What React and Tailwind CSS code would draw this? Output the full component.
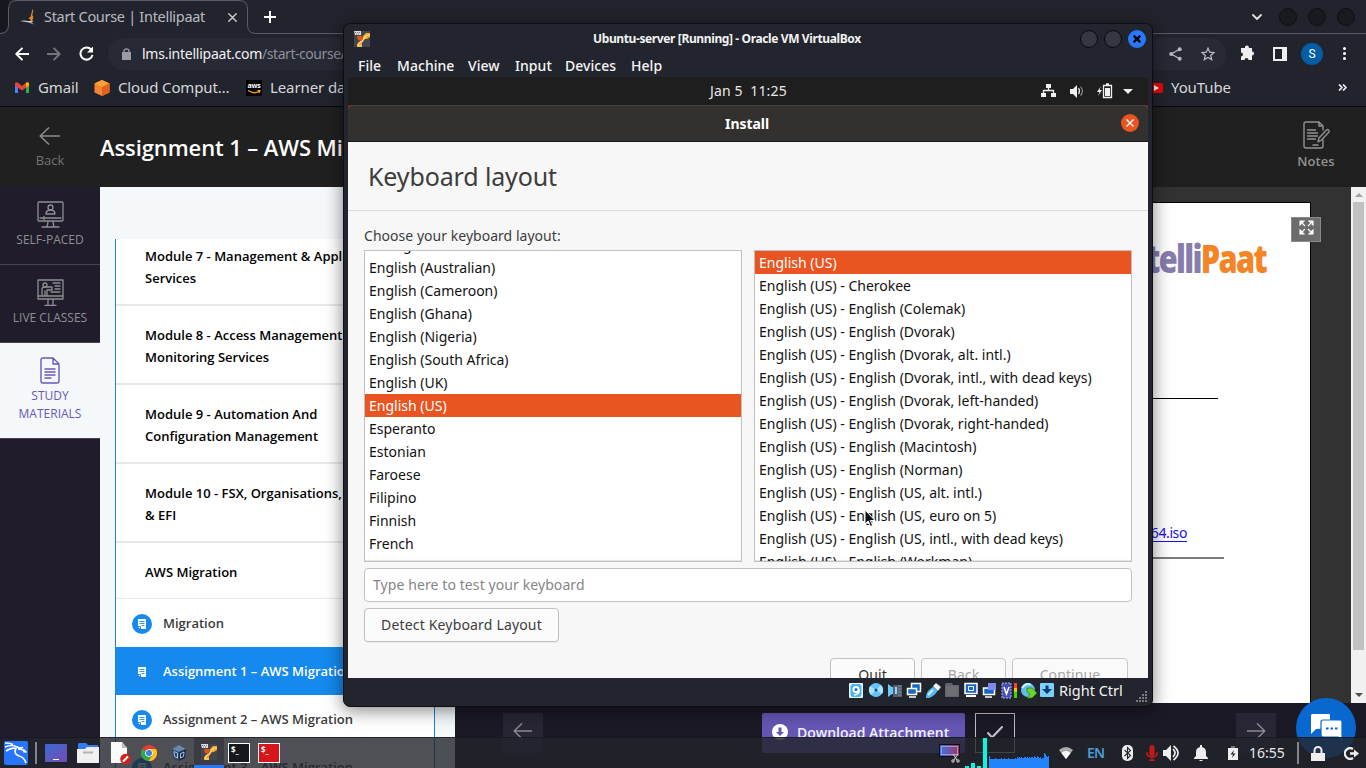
import React from "react";

const ICON = { fill: "none", stroke: "currentColor", strokeLinecap: "round", strokeLinejoin: "round" };

const leftLayouts = [
  "Dzongkha", "English (Australian)", "English (Cameroon)", "English (Ghana)", "English (Nigeria)",
  "English (South Africa)", "English (UK)", "English (US)", "Esperanto", "Estonian", "Faroese",
  "Filipino", "Finnish", "French", "French (Canada)",
];

const rightLayouts = [
  "English (US)", "English (US) - Cherokee", "English (US) - English (Colemak)", "English (US) - English (Dvorak)",
  "English (US) - English (Dvorak, alt. intl.)", "English (US) - English (Dvorak, intl., with dead keys)",
  "English (US) - English (Dvorak, left-handed)", "English (US) - English (Dvorak, right-handed)",
  "English (US) - English (Macintosh)", "English (US) - English (Norman)", "English (US) - English (US, alt. intl.)",
  "English (US) - English (US, euro on 5)", "English (US) - English (US, intl., with dead keys)",
  "English (US) - English (Workman)",
];

function ArrowLeft({ className }) {
  return (
    <svg className={className} viewBox="0 0 22 20" {...ICON} strokeWidth="1.6" strokeLinecap="butt">
      <path d="M21 10H1.5M10 1.5L1.2 10l8.8 8.5" />
    </svg>
  );
}

function TabStrip() {
  return (
    <div className="relative flex h-[34px] shrink-0 items-center bg-[#22242d]">
      <svg className="absolute left-0 top-0 h-[34px] w-[1366px]" viewBox="0 0 1366 34" fill="none">
        <path d="M0 0h9v22q-1 9-9 11z" fill="#17181f" />
        <path d="M0 33.500Q8.500 33.500 8.500 25V9Q8.500.5 17 .5H239Q247.500.5 247.500 9V25Q247.500 33.500 256 33.500H1366" stroke="#5b5d64" />
      </svg>
      <svg className="relative ml-[20px] h-[16px] w-[16px]" viewBox="0 0 16 16">
        <path d="M12.500 0q1 1 .5 3l-.7 3 1 2-1 5-3 .3q2-2 1-3L8 9q3-.5 3-3z" fill="#e8842a" />
        <path d="M0 12q4-1 8 0l6 0-3 1 3 2.500-5-2z" fill="#c9c8e0" />
      </svg>
      <span className="relative ml-[8px] w-[164px] pb-[2px] text-[14.500px] leading-[20px] tracking-[-0.3px] text-[#b9bac0]">Start Course | Intellipaat</span>
      <svg className="relative ml-[20px] h-[9px] w-[9px] text-[#c6c7cb]" viewBox="0 0 9 9" {...ICON} strokeWidth="1.500"><path d="M.8.8l7.400 7.400M8.200.8L.8 8.200" /></svg>
      <svg className="relative ml-[27px] h-[12px] w-[12px] text-white" viewBox="0 0 12 12" {...ICON} strokeWidth="2" strokeLinecap="butt"><path d="M6 0v12M0 6h12" /></svg>
      <div className="relative ml-auto mr-[11px] flex items-center">
        <svg className="mr-[17px] h-[7px] w-[10px] text-[#e0e0e2]" viewBox="0 0 10 7" {...ICON} strokeWidth="1.800"><path d="M1 1l4 4 4-4" /></svg>
        <div className="flex gap-[11px]">
          {[0, 1, 2].map((i) => <span key={i} className="h-[18px] w-[18px] rounded-full border border-[#0f1014] bg-[#191a1f]" />)}
        </div>
      </div>
    </div>
  );
}

function Toolbar() {
  return (
    <div className="flex h-[38px] shrink-0 items-center bg-[#22242d] pb-[1px]">
      <svg className="ml-[15px] mt-[2px] h-[14px] w-[14px] text-white" viewBox="0 0 14 14" {...ICON} strokeWidth="1.900" strokeLinecap="butt"><path d="M14 7H1.500M7.500 .8L1.300 7l6.200 6.200" /></svg>
      <svg className="ml-[18px] mt-[2px] h-[14px] w-[14px] text-[#73757c]" viewBox="0 0 14 14" {...ICON} strokeWidth="1.900" strokeLinecap="butt"><path d="M0 7h12.500M6.500 .8L12.700 7l-6.200 6.200" /></svg>
      <svg className="ml-[18px] mt-[2px] h-[15px] w-[15px] text-white" viewBox="0 0 15 15" fill="none" stroke="currentColor" strokeWidth="2">
        <path d="M12.200 3.500A6.100 6.100 0 1 0 13.500 9" /><path d="M14 .5v6H8z" fill="currentColor" stroke="none" />
      </svg>
      <div className="ml-[14px] mt-[2px] flex h-[32px] w-[1118px] items-center rounded-full bg-[#272934] pl-[14px]">
        <svg className="h-[12px] w-[9px] text-[#9b9ca3]" viewBox="0 0 9 12"><path d="M0 4h9v8H0z" fill="currentColor" /><path d="M2 5V3a2.500 2.200 0 0 1 5 0v2" fill="none" stroke="currentColor" strokeWidth="1.300" /></svg>
        <span className="ml-[11px] w-[900px] text-[14px] leading-[20px] tracking-[-0.45px] text-[#8e9098]"><span className="tracking-[-0.24px] text-[#f0f0f2]">lms.intellipaat.com</span>/start-course/</span>
        <svg className="ml-auto h-[14px] w-[13px] text-[#b7b8bd]" viewBox="0 0 13 14" fill="currentColor"><circle cx="10.700" cy="2.300" r="2" /><circle cx="2.200" cy="7" r="2" /><circle cx="10.700" cy="11.700" r="2" /><path d="M10.700 2.300L2.200 7l8.500 4.700" fill="none" stroke="currentColor" strokeWidth="1.300" /></svg>
        <svg className="ml-[19px] mr-[11px] h-[14px] w-[14px] text-[#b7b8bd]" viewBox="0 0 14 14" fill="none" stroke="currentColor" strokeWidth="1.300"><path d="M7 1.300l1.700 3.900 4.200.4-3.200 2.800 1 4.200L7 10.400l-3.700 2.200 1-4.200L1.100 5.600l4.200-.4z" /></svg>
      </div>
      <svg className="ml-[14px] h-[15px] w-[15px] text-[#efefef]" viewBox="0 0 15 15" fill="currentColor"><path d="M1 3h4a2 2 0 1 1 3.800 0H12v3.500a2 2 0 1 1 0 4V15H8.500a2 2 0 0 0-4 0H1v-3.500a2 2 0 0 0 0-4z" /></svg>
      <svg className="ml-[18px] mt-[2px] h-[14px] w-[14px]" viewBox="0 0 14 14"><path d="M1 1h12v12H1z" fill="none" stroke="#efefef" strokeWidth="2" /><path d="M9 1h4v12H9z" fill="#efefef" /></svg>
      <span className="ml-[14px] mt-[2px] flex h-[22px] w-[22px] items-center justify-center rounded-full bg-[#055da5] font-[Roboto] text-[12px] text-white">S</span>
      <span className="ml-[20px] mt-[2px] flex flex-col gap-[2px]">{[0, 1, 2].map((i) => <i key={i} className="h-[3px] w-[3px] rounded-full bg-white" />)}</span>
    </div>
  );
}

function Bookmarks() {
  return (
    <div className="flex h-[35px] shrink-0 items-center border-b border-[#08080b] bg-[#22242d] pb-[3px] text-[15px] leading-[20px] text-[#d6d7da]">
      <svg className="ml-[15px] h-[11px] w-[14px]" viewBox="0 0 14 11">
        <path d="M0 1.500L3 4v7H0z" fill="#4285f4" /><path d="M14 1.500L11 4v7h3z" fill="#34a853" /><path d="M0 1.500Q1-.5 3 .8L7 4l4-3.200q2-1.300 3 .7v2L7 8.500 0 3.500z" fill="#ea4335" /><path d="M11 .8q2-1.300 3 .7v2l-3 2z" fill="#fbbc04" />
      </svg>
      <span className="ml-[9px] w-[41px] pb-[2px] tracking-[-0.15px]">Gmail</span>
      <svg className="ml-[15px] h-[16px] w-[16px]" viewBox="0 0 16 16"><path d="M8 0l7.500 3.500v9L8 16 .5 12.500v-9z" fill="#f58536" /><path d="M8 0l7.500 3.500L8 7 .5 3.500z" fill="#fba333" /><path d="M15.500 3.500v9L8 16V7z" fill="#e2611c" /></svg>
      <span className="ml-[8px] w-[112px] pb-[2px] tracking-[-0.13px]">Cloud Comput…</span>
      <span className="ml-[16px] flex h-[16px] w-[16px] flex-col items-center bg-black pt-[2px] text-[7px] font-bold leading-[7px] tracking-[-0.3px] text-white">aws<svg className="mt-[1px] h-[4px] w-[13px]" viewBox="0 0 13 4" fill="none" stroke="#f59a23" strokeWidth="1.300"><path d="M0 .5q6 4 11 .8M9.500.6H12L11 3" /></svg></span>
      <span className="ml-[8px] pb-[2px] tracking-[-0.1px]">Learner dashboard</span>
      <span className="ml-auto mr-[8px] flex h-[10px] w-[14px] items-center justify-center rounded-[2px] bg-[#f20505]"><i className="border-y-[3px] border-l-[5px] border-y-transparent border-l-white" /></span>
      <span className="w-[59px] pb-[2px] tracking-[-0.1px]">YouTube</span>
      <svg className="ml-[108px] mr-[19px] h-[7px] w-[9px] text-[#efefef]" viewBox="0 0 9 7" {...ICON} strokeWidth="1.700" strokeLinecap="butt"><path d="M1 .5l3 3-3 3M5 .5l3 3-3 3" /></svg>
    </div>
  );
}

function CourseHeader() {
  return (
    <div className="flex h-[80px] shrink-0 items-start bg-[#202020] font-['Open_Sans']">
      <div className="flex w-[100px] flex-col items-center pt-[19px] text-[#737373]">
        <ArrowLeft className="h-[20px] w-[22px] text-[#8b8b8b]" />
        <span className="mt-[5px] text-[13px] leading-[18px]">Back</span>
      </div>
      <h1 className="mt-[24px] text-[22px] font-semibold leading-[32px] tracking-[-0.1px] text-white">Assignment 1 – AWS Migration</h1>
      <div className="ml-auto mr-[20px] flex w-[60px] flex-col items-center pt-[14px] text-[#929292]">
        <svg className="ml-[1px] h-[28px] w-[28px]" viewBox="0 0 28 28" {...ICON} strokeWidth="1.400">
          <path d="M20 9V5l-4-4H3Q1 1 1 3v22q0 2 2 2h15q2 0 2-2v-6M16 1v4h4M4.500 9h8M4.500 12h10M4.500 15h10M4.500 18h8M10 24h5M15 21l1-4 7.500-8q1-1 2 0t.5 2l-7.500 8z" />
        </svg>
        <span className="mt-[3px] text-[13px] font-semibold leading-[18px] tracking-[0.1px]">Notes</span>
      </div>
    </div>
  );
}

function Sidebar() {
  return (
    <nav className="flex w-[100px] shrink-0 flex-col bg-[#201c2c] text-center font-['Open_Sans'] text-[12px] leading-[18px] text-[#8f8f92]">
      <div className="flex h-[78px] flex-col items-center border-b border-[#45434d] pt-[14px]">
        <svg className="h-[27px] w-[27px]" viewBox="0 0 27 27" {...ICON} strokeWidth="1.300"><path d="M2 1h23q1 0 1 1v17q0 1-1 1H2q-1 0-1-1V2q0-1 1-1zM3 17h21M7 15.500v3M5 26h17M10 26l1-5M17 26l-1-5M9 13q0-4 4.500-4t4.500 4z" /><circle cx="13.500" cy="6.500" r="2.500" /></svg>
        <span className="mt-[3px]">SELF-PACED</span>
      </div>
      <div className="flex h-[78px] flex-col items-center border-b border-[#45434d] pt-[14px]">
        <svg className="h-[27px] w-[27px]" viewBox="0 0 27 27" {...ICON} strokeWidth="1.300"><path d="M1 1h25v19H1zM1 17h25M11 20v6M16 20v6M8 26.300h11M5 17v-7q0-2 3-2h7v3h-5v6M8 17v-5M16 4h7M18 7h5M18 10h5M14 13h9" /><circle cx="8" cy="6" r="2" /></svg>
        <span className="mt-[3px]">LIVE CLASSES</span>
      </div>
      <div className="flex h-[96px] flex-col items-center border-b border-[#45434d] bg-[#f4f8fb] pt-[14px] text-[#6957b8]">
        <svg className="mr-[1px] h-[27px] w-[20px]" viewBox="0 0 20 27" {...ICON} strokeWidth="1.400"><path d="M13 1H3Q1 1 1 3v21q0 2 2 2h14q2 0 2-2V7zM13 1v6h6M5 12h10M5 15h10M5 18h10M5 21h6" /></svg>
        <span className="mt-[3px]">STUDY<br />MATERIALS</span>
      </div>
    </nav>
  );
}

function DocBadge({ active }) {
  return (
    <span className={`ml-[16px] mt-[2px] flex h-[20px] w-[20px] items-center justify-center rounded-full ${active ? "" : "bg-[#1589ee]"}`}>
      <svg className="h-[10px] w-[8px]" viewBox="0 0 8 10"><path d="M0 0h8v10H3L0 8z" fill="#fff" /><path d="M1.500 2.500h5M1.500 4.500h5M3.500 6.500h3M0 7.500h2.500V10" stroke="#1589ee" strokeWidth=".9" fill="none" /></svg>
    </span>
  );
}

function Lesson({ children, active, className = "h-[48px]" }) {
  return (
    <div className={`flex shrink-0 items-center ${className} ${active ? "bg-[#1589ee] text-white" : "bg-white text-[#3b3b3b]"}`}>
      <DocBadge active={active} />
      <span className="ml-[11px] text-[13px] font-semibold">{children}</span>
    </div>
  );
}

function ModuleList() {
  const modules = [
    ["Module 8 - Access Management And", "Monitoring Services"],
    ["Module 9 - Automation And", "Configuration Management"],
    ["Module 10 - FSX, Organisations, SCP", "& EFI"],
  ];
  return (
    <div className="flex w-[355px] shrink-0 flex-col overflow-hidden bg-[#f4f8fb] pl-[15px] pt-[52px] font-['Open_Sans'] text-[13px] font-semibold leading-[22px] text-black">
      <div className="flex w-[320px] flex-col border-x border-[#1b83d8] bg-white">
        <div className="h-[67px] shrink-0 border-b-2 border-[#e8e8e8] pl-[29px] pt-[6px]">Module 7 - Management &amp; Application<br />Services</div>
        {modules.map(([a, b]) => (
          <div key={a} className="h-[79px] shrink-0 border-b-2 border-[#e8e8e8] pl-[29px] pt-[18px]">{a}<br />{b}</div>
        ))}
        <div className="h-[56px] shrink-0 border-b border-[#e8e8e8] pl-[29px] pt-[18px]">AWS Migration</div>
        <Lesson className="h-[48px]">Migration</Lesson>
        <Lesson active>Assignment 1 – AWS Migration</Lesson>
        <Lesson>Assignment 2 – AWS Migration</Lesson>
        <Lesson>Assignment 3 – AWS Migration</Lesson>
      </div>
    </div>
  );
}

function Viewer() {
  return (
    <div className="flex min-w-0 flex-1 flex-col bg-[#1c1927]">
      <div className="flex h-[516px] shrink-0 bg-[#323232]">
        <div className="relative ml-[40px] mt-[15px] flex w-[816px] flex-col items-end border border-b-0 border-black bg-white">
          <div className="mr-[44px] mt-[33px] origin-right scale-y-[1.06] scale-x-[0.83] font-['Open_Sans'] text-[37px] font-extrabold leading-[44px] tracking-[-2px] text-[#877cae]">Intelli<span className="text-[#f58426]">Paat</span></div>
          <div className="mr-[92px] mt-[118px] h-px w-[560px] bg-black" />
          <div className="mr-[123px] mt-[124px] text-[14px] leading-[20px] tracking-[-0.4px] text-[#1a0dee] underline underline-offset-3">ubuntu-20.04-server-amd64.iso</div>
          <div className="mr-[86px] mt-[14px] h-[2px] w-[600px] bg-[#7c7c7c]" />
          <div className="absolute right-[-11px] top-[14px] flex h-[25px] w-[30px] items-center justify-center border border-[#8a8a8a] bg-[#6c6c6c] pb-[4px]">
            <svg className="h-[15px] w-[15px]" viewBox="0 0 15 15" fill="#fff" stroke="#fff" strokeWidth="1.100"><path d="M1 1h4L1 5zM14 1v4l-4-4zM1 14v-4l4 4zM14 14h-4l4-4zM2 2l4 4M13 2L9 6M2 13l4-4M13 13L9 9" /></svg>
          </div>
        </div>
        <div className="ml-auto flex w-[15px] flex-col items-center bg-[#f1f1f1]">
          <i className="mt-[6px] border-x-[4px] border-b-[4px] border-x-transparent border-b-[#a3a3a3]" />
          <span className="mt-[5px] h-[448px] w-[11px] bg-[#c1c1c1]" />
          <i className="mb-[6px] mt-auto border-x-[4px] border-t-[4px] border-x-transparent border-t-[#505050]" />
        </div>
      </div>
      <div className="flex items-start pt-[10px] font-['Open_Sans']">
        <div className="ml-[48px] flex h-[40px] w-[40px] items-center justify-center bg-[#282534] pb-[4px] text-[#8b8a90]"><ArrowLeft className="h-[18px] w-[22px]" /></div>
        <div className="ml-[219px] flex h-[40px] w-[203px] items-center rounded-[2px] bg-[#6656b4] pl-[10px]">
          <svg className="mb-[2px] h-[16px] w-[16px]" viewBox="0 0 16 16"><circle cx="8" cy="8" r="8" fill="#fff" /><path d="M6.500 3.500h3V8H12l-4 4-4-4h2.500z" fill="#6656b4" /></svg>
          <span className="ml-[9px] text-[14px] font-semibold leading-[20px] text-[#f2f0f8]">Download Attachment</span>
        </div>
        <div className="ml-[10px] flex h-[40px] w-[40px] items-center justify-center border border-[#c0c0c4] pb-[2px] text-[#c4c4c6]">
          <svg className="h-[13px] w-[16px]" viewBox="0 0 16 13" {...ICON} strokeWidth="2"><path d="M1 7l4 4.500L15 1" /></svg>
        </div>
        <div className="ml-[221px] flex h-[40px] w-[40px] items-center justify-center bg-[#282534] pb-[4px] text-[#8b8a90]"><ArrowLeft className="h-[18px] w-[22px] rotate-180" /></div>
      </div>
    </div>
  );
}

function ChatBubble() {
  return (
    <div className="absolute left-[1296px] top-[698px] flex h-[60px] w-[60px] items-center justify-center rounded-full bg-[#0868cf]">
      <svg className="h-[28px] w-[32px]" viewBox="0 0 32 28"><path d="M2 0h17q1 0 1 1v13L6 15l-5 5V2q0-2 1-2z" fill="#fff" /><path d="M13 6h17q2 0 2 2v19l-4-4H13q-2 0-2-2V8q0-2 2-2z" fill="#fff" stroke="#0868cf" strokeWidth="1.200" /><path d="M16 14.500h2.500M20.500 14.500H23M25 14.500h2.500" stroke="#0868cf" strokeWidth="2" /></svg>
    </div>
  );
}

function VBoxTools({ className }) {
  return (
    <svg className={className} viewBox="0 0 16 16">
      <path d="M0 0h16v16H0z" fill="#44464e" />
      <path d="M9 5l3-3h4v4l-3 2-2 0-3 4v4H3v-3l3-2 2-2z" fill="#f5a52e" />
      <path d="M4 15l1-3 3-2 3-4 2-2h3M4 15h4" fill="none" stroke="#fde08a" strokeWidth="1.200" /><path d="M3 5h5l1 3-2 2-3-1z" fill="#e0551b" /><path d="M0 0h7v4H1z" fill="#ddd" /><path d="M1 1.500h5M2 3h4" stroke="#777" strokeDasharray="1 1" />
    </svg>
  );
}

function LayoutList({ items, selected, shift }) {
  return (
    <div className="h-[312px] w-[378px] overflow-hidden border border-[#c3c1bf] bg-white text-[14px] leading-[23px] tracking-[0px] text-[#111] shadow-[inset_0_-1px_1px_rgba(0,0,0,0.12)]">
      <div className={shift}>
        {items.map((t) => (
          <div key={t} className={`h-[23px] pl-[4px] ${t === selected ? "bg-[#e95420] text-white" : ""}`}>{t}</div>
        ))}
      </div>
    </div>
  );
}

function StatusIcons() {
  return (
    <svg className="h-[17px] w-[206px] shrink-0" viewBox="0 0 206 17">
      <g><rect x="0" y="1" width="14" height="15" rx="1" fill="#e9f7ff" /><rect x="1.500" y="2" width="11" height="13" rx="3" fill="#49b5ee" /><circle cx="7" cy="7.500" r="3.500" fill="#fff" /><circle cx="7" cy="7.500" r="1.500" fill="#126fc0" /><path d="M10 8q1 4-5 5" stroke="#fff" strokeWidth="1.500" fill="none" /></g>
      <circle cx="27" cy="8" r="7" fill="#66c4f6" /><path d="M27 8l5-5a7 7 0 0 1 1 9zM27 8l-5 5a7 7 0 0 1-1-9z" fill="#a8e2ff" /><circle cx="27" cy="8" r="1.500" fill="#0b4d8c" />
      <path d="M39 2l4 3h4v7h-4l-4 3z" fill="#6cc8f4" /><path d="M44 3h9v12h-9z" fill="#55606c" /><path d="M46 5h2v7h-2z" fill="#8ed6ff" /><path d="M49 4h3M49 7h3M49 10h3M49 13h3" stroke="#8a8f96" />
      <path d="M62.500 1.500h9v8h-9z" fill="#1867c4" stroke="#fff" strokeWidth="1.500" /><path d="M58.500 6.500h9v6h-9zM60 15h7" fill="#1867c4" stroke="#fff" strokeWidth="1.500" />
      <path d="M77 16q0-5 3-8l5-4 4 4q-3 6-9 8z" fill="#55baf2" /><path d="M84 4l3-3 5 4-3 4z" fill="#f4f4f4" stroke="#777" strokeWidth=".5" /><path d="M79 13l5-5" stroke="#c9edff" strokeWidth="2" />
      <path d="M96 3l1-2h6l1 2h6v12H96z" fill="#62636a" /><path d="M97 4h12v10H97z" fill="#6e6f75" />
      <path d="M116 1.500h12v10h-12z" fill="#1867c4" stroke="#fff" strokeWidth="1.500" /><path d="M119.500 4.500h5v4h-5z" fill="#1867c4" stroke="#fff" /><path d="M117 14h10" stroke="#fff" strokeWidth="2" />
      <path d="M134.500 6h11v6.500h-11z" fill="#1867c4" stroke="#fff" strokeWidth="1.500" /><path d="M139 1h8v7h-8z" fill="#7d8aea" /><path d="M136 15h7" stroke="#fff" strokeWidth="1.500" />
      <path d="M153 1h9v15h-9z" fill="#4650b8" stroke="#aab0f5" strokeDasharray="2 1" /><path d="M155 5l2.500 7L160 5" fill="none" stroke="#fff" strokeWidth="1.500" /><path d="M165 1h3v5h-3z" fill="#ff4218" /><path d="M165 6h3v4h-3z" fill="#f4c20a" /><path d="M165 10h3v6h-3z" fill="#34d900" />
      <circle cx="179" cy="8" r="7" fill="#61bdea" /><path d="M173 6q4-6 9-3" stroke="#c9f2ff" strokeWidth="2" fill="none" /><path d="M178 6h5l5 5-5 5h-5l3-4-3-2z" fill="#6dd22b" stroke="#267912" strokeWidth=".7" />
      <rect x="191" y="1" width="14" height="14" rx="1" fill="#7bd1fa" /><path d="M196.500 3.500h3V7h3.500l-5 5-5-5h3.500z" fill="#0c3d78" />
    </svg>
  );
}

function VirtualMachine() {
  return (
    <div className="absolute left-[343px] top-[23px] flex h-[684px] w-[810px] flex-col rounded-[7px] border border-[#0d0e12] bg-[#22252e] px-[4px] font-['Noto_Sans'] shadow-[0_3px_18px_rgba(0,0,0,0.5)]">
      <div className="flex h-[30px] shrink-0 items-center">
        <VBoxTools className="ml-[6px] h-[16px] w-[16px]" />
        <span className="ml-[223px] w-[268px] whitespace-nowrap text-[12px] font-bold leading-[18px] tracking-[-0.38px] text-[#f2f2f2]">Ubuntu-server [Running] - Oracle VM VirtualBox</span>
        <div className="ml-auto mr-[2px] flex gap-[6px]">
          <span className="h-[18px] w-[18px] rounded-full border border-[#07080a] bg-[#343741]" />
          <span className="h-[18px] w-[18px] rounded-full border border-[#07080a] bg-[#343741]" />
          <span className="flex h-[18px] w-[18px] items-center justify-center rounded-full bg-[#2777ff]"><svg className="h-[8px] w-[8px]" viewBox="0 0 8 8" stroke="#000" strokeWidth="2.300"><path d="M.7.7l6.600 6.600M7.300.7L.7 7.300" /></svg></span>
        </div>
      </div>
      <div className="flex h-[23px] shrink-0 items-center pl-[10px] text-[14px] font-medium leading-[20px] tracking-[0.05px] text-[#f5f5f5]">
        <span className="w-[39px]">File</span><span className="w-[71px]">Machine</span><span className="w-[47px]">View</span><span className="w-[50px]">Input</span><span className="w-[66px]">Devices</span><span>Help</span>
      </div>
      <div className="flex h-[28px] shrink-0 items-center bg-[#1e1e1e] text-[#e8e8e8]">
        <span className="ml-[362px] w-[78px] whitespace-pre text-[14px] leading-[20px] tracking-[0.15px]">Jan 5  11:25</span>
        <svg className="ml-auto mr-[15px] h-[16px] w-[92px]" viewBox="0 0 92 16">
          <g fill="#f0f0f0"><path d="M5 1h5v4H5zM0 10h5v4H0zM10 10h5v4h-5z" /><path d="M7.500 4v3.500M2.500 11V7.500h10V11" fill="none" stroke="#f0f0f0" strokeWidth="1.300" /><path d="M29 6h3l4-4v13l-4-4h-3z" /><path d="M37.500 5q2 3 0 6" fill="none" stroke="#f0f0f0" strokeWidth="1.200" /><path d="M39.500 3.500q4 5 0 9" fill="none" stroke="#888" strokeWidth="1.200" /><path d="M60 3l-4 6h2.500L57 13l4-6h-2.500z" /><path d="M64 5h5v8h-5z" /><path d="M62.500 2.500h8v12h-8zM65 1h3" fill="none" stroke="#f0f0f0" strokeWidth="1.300" /><path d="M82 6h10l-5 5z" /></g>
        </svg>
      </div>
      <div className="shrink-0 bg-[#8f1d22]">
        <div className="flex h-[37px] items-center rounded-t-[5px] border-b border-t border-b-[#1c1b1b] border-t-[#454343] bg-[#333030]">
          <span className="ml-[377px] w-[45px] text-[14px] font-bold leading-[20px] tracking-[-0.05px] text-white">Install</span>
          <span className="mb-[1px] ml-auto mr-[9px] flex h-[18px] w-[18px] items-center justify-center rounded-full bg-[#e95420]"><svg className="h-[8px] w-[8px]" viewBox="0 0 8 8" stroke="#fff" strokeWidth="1.400"><path d="M.5.5l7 7M7.500.5l-7 7" /></svg></span>
        </div>
      </div>
      <div className="flex h-[536px] shrink-0 flex-col overflow-hidden bg-[#f7f7f7] text-[#3d3d3d]">
        <div className="h-[69px] shrink-0 border-b border-[#dadada] pl-[20px] pt-[16px] text-[25px] leading-[36px] tracking-[-0.13px]">Keyboard layout</div>
        <div className="flex flex-col px-[16px] pt-[15px]">
          <div className="text-[14px] leading-[20px] tracking-[0.03px]">Choose your keyboard layout:</div>
          <div className="mt-[4px] flex justify-between">
            <LayoutList items={leftLayouts} selected="English (US)" shift="-mt-[18px]" />
            <LayoutList items={rightLayouts} selected="English (US)" shift="mt-0" />
          </div>
          <div className="mt-[6px] flex h-[34px] items-center rounded-[4px] border border-[#c3c1bf] bg-white pb-[2px] pl-[8px] text-[14px] tracking-[0.09px] text-[#858585]">Type here to test your keyboard</div>
          <div className="mt-[6px] flex h-[34px] w-[195px] items-center justify-center rounded-[4px] border border-[#c3c1bf] bg-[#fbfbfb] pb-[2px] text-[14px] tracking-[0.17px] shadow-[0_1px_1px_rgba(0,0,0,0.06)]">Detect Keyboard Layout</div>
          <div className="mr-[4px] mt-[16px] flex justify-end gap-[6px] text-[14px] tracking-[0.1px] text-[#a6a6a6]">
            <div className="flex h-[34px] w-[85px] items-center justify-center rounded-[4px] border border-[#c3c1bf] bg-[#fbfbfb] pb-[2px] text-[#333]">Quit</div>
            <div className="flex h-[34px] w-[85px] items-center justify-center rounded-[4px] border border-[#c9c7c5] bg-[#fafafa] pb-[2px]">Back</div>
            <div className="flex h-[34px] w-[116px] items-center justify-center rounded-[4px] border border-[#c9c7c5] bg-[#fafafa] pb-[2px]">Continue</div>
          </div>
        </div>
      </div>
      <div className="flex flex-1 items-center justify-end pb-[5px]">
        <StatusIcons />
        <span className="ml-[4px] w-[67px] whitespace-nowrap text-[14.500px] leading-[20px] tracking-[0px] text-[#f2f2f2]">Right Ctrl</span>
        <svg className="ml-[10px] mt-[12px] h-[12px] w-[12px]" viewBox="0 0 12 12" fill="none" stroke="#77797f" strokeWidth="2" strokeDasharray="2 1"><path d="M0 11h12M3 8h9M6 5h6M9 2h3" /></svg>
      </div>
    </div>
  );
}

function Cursor() {
  return (
    <svg className="absolute left-[864px] top-[509px] h-[19px] w-[12px]" viewBox="0 0 12 19"><path d="M1 1v14l3.200-3 2.300 5.500 2.200-1L6.400 11.500H11z" fill="#111" stroke="#fff" strokeWidth="1" /></svg>
  );
}

const graph = [12, 9, 9, 9, 9, 9, 10, 9, 9, 9, 9, 9, 9, 10, 9, 9, 10, 9, 9, 9, 10, 9, 9, 9, 9, 10, 9, 9, 10, 9, 11, 10, 11, 10, 11, 10, 10, 11, 11, 10, 11, 12, 10, 11, 10, 11, 11, 10, 12, 11, 10, 12, 11, 10, 11, 9, 10, 10, 9, 15, 14, 12, 11, 12];

function Taskbar() {
  return (
    <div className="absolute left-0 top-[737px] flex h-[31px] w-[1366px] items-center border-t border-[#15161b]/70 bg-[#22242c]/80 font-['Noto_Sans']">
      <svg className="ml-[3px] h-[26px] w-[26px]" viewBox="0 0 26 26"><rect x="1" y="1" width="24" height="24" rx="2" fill="#2675fc" /><path d="M2 3q5 0 8 1.500M2 7q7-3 12 0 4 2 6 0M3 11q6-4 10-2.500-3 5 3 7.500 5 1 7 7M15 9l6 1 2 2-3-.5" fill="none" stroke="#fff" strokeWidth="1.600" strokeLinejoin="round" /></svg>
      <i className="ml-[6px] h-[22px] w-[2px] bg-[#858589]" />
      <span className="ml-[8px] flex h-[18px] w-[22px] items-end justify-center rounded-[1px] bg-linear-to-br from-[#3269d5] to-[#704bae] pb-[2px]"><i className="w-[6px] border-b border-dashed border-white" /></span>
      <svg className="ml-[10px] h-[20px] w-[22px]" viewBox="0 0 22 20"><path d="M2 0h7l2 2h10v5H1V1z" fill="#347bf4" /><path d="M0 6h8l2-2h12v16H0z" fill="#f0f0f0" /><path d="M6 8.500h10v2H6z" fill="#b3b3b3" /></svg>
      <svg className="ml-[12px] h-[23px] w-[20px]" viewBox="0 0 20 23"><path d="M0 0h11l5 6v15H0z" fill="#fafafa" /><path d="M11 0v6h5z" fill="#bbb" /><circle cx="14.500" cy="17" r="5.300" fill="#d5211e" /><path d="M12 19.500l5-5" stroke="#fff" strokeWidth="2" /></svg>
      <svg className="ml-[10px] h-[16px] w-[16px]" viewBox="0 0 16 16"><circle cx="8" cy="8" r="8" fill="#e33b2e" /><path d="M8 8L1 4a8 8 0 0 0 6.500 12L11 10z" fill="#2da94f" /><path d="M8 4h7a8 8 0 0 1-7.500 12L11.500 10z" fill="#fbc116" /><circle cx="8" cy="8" r="3.800" fill="#fff" /><circle cx="8" cy="8" r="3" fill="#3e7de8" /></svg>
      <svg className="ml-[15px] h-[16px] w-[14px]" viewBox="0 0 14 16"><path d="M7 0l7 4-1 9-6 3-6-3L0 4z" fill="#2d4468" /><path d="M7 0l7 4-7 3L0 4z" fill="#6a87ad" /><path d="M7 7l7-3-1 9-6 3z" fill="#1b2c4b" /><path d="M2 6.500l3.500 1.500v5L2.500 11.500zM8.500 8.500l3.500-1.500-.5 4.500-3 1.500z" fill="none" stroke="#a9c2df" strokeWidth="1" /></svg>
      <span className="ml-[8px] flex h-full w-[30px] flex-col items-center justify-between bg-[#3a3b43] pt-[6px]"><VBoxTools className="h-[16px] w-[16px]" /><i className="h-[3px] w-[30px] bg-[#2777ff]" /></span>
      <span className="ml-[4px] h-[20px] w-[22px] border border-white bg-[#17181c] pl-[2px] text-[8px] font-bold leading-[12px] text-white">$_</span>
      <span className="ml-[8px] h-[20px] w-[22px] border border-white bg-[#d7151a] pl-[2px] text-[8px] font-bold leading-[12px] text-white">$_</span>
      <svg className="ml-[659px] h-[19px] w-[22px]" viewBox="0 0 22 19"><defs><linearGradient id="shot"><stop stopColor="#3976e6" /><stop offset="1" stopColor="#a33264" /></linearGradient></defs><rect x=".5" y=".5" width="20" height="12" fill="url(#shot)" stroke="#0d0e11" /><path d="M2.500 2.500h16v8h-16z" stroke="#d3d9f0" strokeWidth=".5" fill="none" /><path d="M14 10l4 6M19 10l-4 6" stroke="#ddd" strokeWidth="1" /><circle cx="14" cy="17" r="1.200" fill="none" stroke="#ddd" /><circle cx="19" cy="17" r="1.200" fill="none" stroke="#ddd" /></svg>
      <svg className="ml-[4px] h-[30px] w-[84px] shrink-0" viewBox="0 0 84 30" shapeRendering="crispEdges">
        <path d="M0 28h4v2H0zM6 25h4v5H6zM12 28h4v2h-4zM18 0h4v30h-4z" fill="#0cf6df" />
        <path d={`M24 30${graph.map((v, i) => `V${30 - v}H${(24 + (i + 1) * 0.94).toFixed(2)}`).join("")}V30z`} fill="#2383fa" />
      </svg>
      <svg className="ml-[10px] h-[12px] w-[14px]" viewBox="0 0 14 12"><path d="M0 3q7-6 14 0L7 12z" fill="#aaa" /><path d="M2.500 6q4.500-4 9 0L7 12z" fill="#fff" /></svg>
      <span className="ml-[14px] w-[18px] text-[14px] font-semibold leading-[20px] tracking-[-0.9px] text-[#4a9bd6]">EN</span>
      <svg className="ml-[17px] h-[16px] w-[11px]" viewBox="0 0 11 16"><rect width="11" height="16" rx="5" fill="#ededed" /><path d="M2.500 5l6 5.500-3 3v-11l3 3-6 5.500" fill="none" stroke="#24252c" strokeWidth="1.100" /></svg>
      <svg className="ml-[13px] h-[16px] w-[12px]" viewBox="0 0 12 16"><rect x="3.500" width="5" height="11" rx="2.500" fill="#c91818" /><path d="M.8 7q0 5 5.200 5t5.200-5M6 12v3.500M3 15.200h6" fill="none" stroke="#c91818" strokeWidth="1.500" /></svg>
      <svg className="ml-[5px] h-[16px] w-[17px]" viewBox="0 0 17 16"><path d="M0 5h3l5-5v16l-5-5H0z" fill="#eee" /><path d="M10 4q4 4 0 8M10.500 1q9 7 0 14" fill="none" stroke="#eee" strokeWidth="1.700" /></svg>
      <svg className="ml-[14px] h-[16px] w-[14px]" viewBox="0 0 14 16" fill="#eee"><path d="M6 0h2v2q4 1 4 5v4l2 2v1H0v-1l2-2V7q0-4 4-5z" /><path d="M5 15h4l-1 1H6z" /></svg>
      <svg className="ml-[20px] h-[14px] w-[10px]" viewBox="0 0 10 14"><path d="M0 2h10v12H0z" fill="#eee" /><path d="M3 0h4v2H3z" fill="#777" /><path d="M6 4L2.500 8.500H5L4 12l3.500-4.500H5z" fill="#22242c" /></svg>
      <span className="ml-[11px] w-[38px] text-[14px] leading-[20px] tracking-[0px] text-[#e8e8e8]">16:55</span>
      <i className="ml-[10px] h-[22px] w-[2px] bg-[#858589]" />
      <svg className="ml-[12px] h-[15px] w-[14px]" viewBox="0 0 14 15"><path d="M0 7h14v8H0z" fill="#eee" /><path d="M3.500 8V4.500a3.500 3.500 0 0 1 7 0V8" fill="none" stroke="#eee" strokeWidth="2" /></svg>
      <svg className="ml-[19px] h-[13px] w-[15px]" viewBox="0 0 15 13"><path d="M9 2A5.300 5.300 0 1 0 9 11" fill="none" stroke="#eee" strokeWidth="2.200" /><path d="M6 5.300h4V2.500l5 4-5 4V7.700H6z" fill="#eee" /></svg>
    </div>
  );
}

export default function App() {
  return (
    <main className="relative h-[768px] w-[1366px] overflow-hidden whitespace-nowrap font-['Noto_Sans',sans-serif]">
      <div className="flex h-[768px] flex-col">
        <TabStrip />
        <Toolbar />
        <Bookmarks />
        <CourseHeader />
        <div className="flex min-h-0 flex-1">
          <Sidebar />
          <ModuleList />
          <Viewer />
        </div>
      </div>
      <ChatBubble />
      <VirtualMachine />
      <Cursor />
      <Taskbar />
    </main>
  );
}
